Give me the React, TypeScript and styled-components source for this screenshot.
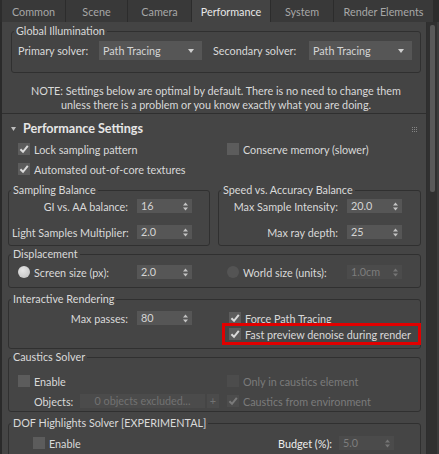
import React from 'react';
import styled, { createGlobalStyle } from 'styled-components';

const GlobalStyle = createGlobalStyle`
  html, body {
    margin: 0;
    padding: 0;
    background: #2d2d2d;
  }
  body {
    width: 439px;
    height: 454px;
    overflow: hidden;
    font-family: Lato, "Noto Sans", sans-serif;
    font-size: 10.8px;
    color: #d9d9d9;
  }
  * { box-sizing: border-box; }
`;

const Frame = styled.div`
  width: 439px;
  height: 454px;
  display: flex;
  flex-direction: column;
  overflow: hidden;
  background: #2d2d2d;
`;

const TabBar = styled.div`
  display: flex;
  height: 22px;
  padding-left: 2px;
  background: #2c2c2c;
`;

const Tab = styled.div<{ $active?: boolean; $w: number }>`
  width: ${p => p.$w}px;
  display: flex;
  align-items: center;
  justify-content: center;
  padding-top: 1px;
  background: ${p => (p.$active ? '#444444' : '#393939')};
  color: ${p => (p.$active ? '#e8e8e8' : '#a7a7a7')};
  border-right: 1px solid #2c2c2c;
  white-space: nowrap;
`;

const Body = styled.div`
  flex: 1;
  display: flex;
  min-height: 0;
`;

const LeftEdge = styled.div`
  width: 2px;
  background: #2a2a2a;
`;

const Main = styled.div`
  width: 425px;
  background: #444444;
  border-right: 1px solid #2e2e2e;
  display: flex;
  flex-direction: column;
`;

const ScrollTrack = styled.div`
  width: 10px;
  padding: 3px 2px 0 3px;
  background: #303030;
`;

const ScrollThumb = styled.div`
  height: 167px;
  border-radius: 2px;
  background: #595959;
`;

const RightEdge = styled.div`
  flex: 1;
  background: #3b3b3b;
`;

const TopSection = styled.div`
  padding: 3px 5px 0 9px;
`;

const Group = styled.fieldset<{ $mt?: number }>`
  margin: ${p => p.$mt ?? 0}px 0 0 0;
  padding: 0;
  min-width: 0;
  border: 1px solid #303030;
  border-radius: 3px;
`;

const Legend = styled.legend`
  margin-left: 2px;
  padding: 0 2px;
  line-height: 12px;
  color: #dadada;
`;

const SolverRow = styled.div`
  display: grid;
  grid-template-columns: 81px 103px 107px 103px;
  align-items: center;
  padding: 4px 0 12px 6px;
`;

const SolverLabel = styled.span<{ $pad?: number }>`
  padding-left: ${p => p.$pad ?? 0}px;
  white-space: nowrap;
`;

const Dropdown = styled.div`
  height: 19px;
  display: flex;
  align-items: center;
  justify-content: space-between;
  padding: 0 8px 0 4px;
  background: #565656;
  color: #d4d4d4;
`;

const Note = styled.p`
  margin: 11px 0 1px;
  text-align: center;
  line-height: 14px;
  white-space: nowrap;
`;

const Rollout = styled.div`
  flex: 1;
  border-top: 1px solid #2f2f2f;
  padding: 0 5px 0 6px;
  background: #454545;
`;

const RolloutHeader = styled.div`
  display: flex;
  align-items: center;
  padding: 8px 4px 3px 3px;
  line-height: 14px;
`;

const RolloutTitle = styled.span`
  margin-left: 7px;
  font-size: 12.6px;
  font-weight: 700;
  color: #e6e6e6;
`;

const Grip = styled.span`
  margin-left: auto;
  display: flex;
`;

const TwoCols = styled.div<{ $left: number; $pl?: number }>`
  display: grid;
  grid-template-columns: ${p => p.$left}px 1fr;
  padding-left: ${p => p.$pl ?? 0}px;
`;

const Stack = styled.div<{ $gap?: number; $pl?: number; $pt?: number; $pb?: number }>`
  display: flex;
  flex-direction: column;
  gap: ${p => p.$gap ?? 0}px;
  padding: ${p => p.$pt ?? 0}px 0 ${p => p.$pb ?? 0}px ${p => p.$pl ?? 0}px;
`;

const CheckRow = styled.label<{ $h?: number; $pl?: number; $mark?: boolean; $disabled?: boolean }>`
  display: flex;
  align-items: center;
  gap: 4px;
  height: ${p => p.$h ?? 20}px;
  padding-left: ${p => p.$pl ?? 0}px;
  color: ${p => (p.$disabled ? '#7b7b7b' : '#d9d9d9')};
  white-space: nowrap;
  ${p => (p.$mark ? 'outline: 3px solid #e10000; margin-right: 2px;' : '')}
`;

const Box = styled.span<{ $disabled?: boolean }>`
  width: 12px;
  height: 12px;
  flex: none;
  display: flex;
  align-items: center;
  justify-content: center;
  background: ${p => (p.$disabled ? '#4c4c4c' : '#5c5c5c')};
`;

const Radio = styled.span<{ $on?: boolean }>`
  width: 12px;
  height: 12px;
  flex: none;
  border-radius: 50%;
  background: ${p => (p.$on ? 'radial-gradient(circle at 40% 35%, #e6e6e6, #bdbdbd)' : '#545454')};
`;

const BalanceGrid = styled.div`
  display: grid;
  grid-template-columns: 202px 203px;
  column-gap: 8px;
  margin-top: 5px;
`;

const SpinRow = styled.div<{ $label: number; $gap?: number; $h?: number; $pl?: number }>`
  display: grid;
  grid-template-columns: ${p => p.$label}px 55px;
  column-gap: ${p => p.$gap ?? 9}px;
  align-items: center;
  height: ${p => p.$h ?? 20}px;
  padding-left: ${p => p.$pl ?? 0}px;
`;

const SpinLabel = styled.span<{ $bright?: boolean }>`
  text-align: right;
  white-space: nowrap;
  color: ${p => (p.$bright ? '#ededed' : '#d9d9d9')};
`;

const OptionLabel = styled.span<{ $disabled?: boolean }>`
  display: flex;
  align-items: center;
  gap: 4px;
  white-space: nowrap;
`;

const SpinBox = styled.div<{ $disabled?: boolean }>`
  height: 14px;
  display: flex;
  align-items: center;
  justify-content: space-between;
  padding: 0 4px;
  background: ${p => (p.$disabled ? '#4b4b4b' : '#565656')};
  color: ${p => (p.$disabled ? '#7d7d7d' : '#d4d4d4')};
  line-height: 14px;
`;

const ObjectsRow = styled.div`
  display: grid;
  grid-template-columns: 44px 125px 12px;
  column-gap: 2px;
  align-items: center;
  height: 20px;
  padding-left: 25px;
`;

const Field = styled.div`
  height: 14px;
  display: flex;
  align-items: center;
  justify-content: center;
  background: #4b4b4b;
  color: #727272;
  line-height: 14px;
`;

const Check = ({ disabled }: { disabled?: boolean }) => (
  <svg width="10" height="10" viewBox="0 0 10 10">
    <path d="M1.4 5.2 L4 7.8 L8.8 1.8" fill="none" stroke={disabled ? '#7a7a7a' : '#dadada'} strokeWidth="2" />
  </svg>
);

const CheckBox = ({ checked, disabled }: { checked?: boolean; disabled?: boolean }) => (
  <Box $disabled={disabled}>{checked && <Check disabled={disabled} />}</Box>
);

const Arrows = ({ disabled }: { disabled?: boolean }) => (
  <svg width="5" height="9" viewBox="0 0 5 9">
    <path d="M0 3.5 L2.5 0.5 L5 3.5Z M0 5.5 L2.5 8.5 L5 5.5Z" fill={disabled ? '#767676' : '#c4c4c4'} />
  </svg>
);

const Spinner = ({ value, disabled }: { value: string; disabled?: boolean }) => (
  <SpinBox $disabled={disabled}>
    <span>{value}</span>
    <Arrows disabled={disabled} />
  </SpinBox>
);

const DropArrow = () => (
  <svg width="6" height="4" viewBox="0 0 6 4">
    <path d="M0 0 L6 0 L3 4Z" fill="#cfcfcf" />
  </svg>
);

const GripDots = () => (
  <svg width="5" height="5" viewBox="0 0 5 5">
    {[0, 2, 4].map(y =>
      [0, 2, 4].map(x => <rect key={`${x}-${y}`} x={x} y={y} width="1" height="1" fill="#858585" />)
    )}
  </svg>
);

const Collapse = () => (
  <svg width="5" height="4" viewBox="0 0 5 4">
    <path d="M0 0 L5 0 L2.5 4Z" fill="#bdbdbd" />
  </svg>
);

const tabs = [
  { name: 'Common', w: 64 },
  { name: 'Scene', w: 62 },
  { name: 'Camera', w: 64 },
  { name: 'Performance', w: 79, active: true },
  { name: 'System', w: 63 },
  { name: 'Render Elements', w: 100 },
];

const App: React.FC = () => (
  <Frame>
    <GlobalStyle />
    <TabBar>
      {tabs.map(t => (
        <Tab key={t.name} $w={t.w} $active={t.active}>
          {t.name}
        </Tab>
      ))}
    </TabBar>
    <Body>
      <LeftEdge />
      <Main>
        <TopSection>
          <Group>
            <Legend>Global Illumination</Legend>
            <SolverRow>
              <SolverLabel>Primary solver:</SolverLabel>
              <Dropdown>
                <span>Path Tracing</span>
                <DropArrow />
              </Dropdown>
              <SolverLabel $pad={11}>Secondary solver:</SolverLabel>
              <Dropdown>
                <span>Path Tracing</span>
                <DropArrow />
              </Dropdown>
            </SolverRow>
          </Group>
          <Note>
            NOTE: Settings below are optimal by default. There is no need to change them
            <br />
            unless there is a problem or you know exactly what you are doing.
          </Note>
        </TopSection>

        <Rollout>
          <RolloutHeader>
            <Collapse />
            <RolloutTitle>Performance Settings</RolloutTitle>
            <Grip>
              <GripDots />
            </Grip>
          </RolloutHeader>

          <TwoCols $left={209} $pl={10}>
            <Stack>
              <CheckRow>
                <CheckBox checked />
                Lock sampling pattern
              </CheckRow>
              <CheckRow>
                <CheckBox checked />
                Automated out-of-core textures
              </CheckRow>
            </Stack>
            <Stack>
              <CheckRow>
                <CheckBox />
                Conserve memory (slower)
              </CheckRow>
            </Stack>
          </TwoCols>

          <BalanceGrid>
            <Group>
              <Legend>Sampling Balance</Legend>
              <Stack $gap={6} $pl={3} $pb={3}>
                <SpinRow $label={116}>
                  <SpinLabel>GI vs. AA balance:</SpinLabel>
                  <Spinner value="16" />
                </SpinRow>
                <SpinRow $label={116}>
                  <SpinLabel>Light Samples Multiplier:</SpinLabel>
                  <Spinner value="2.0" />
                </SpinRow>
              </Stack>
            </Group>
            <Group>
              <Legend>Speed vs. Accuracy Balance</Legend>
              <Stack $gap={6} $pl={3} $pb={3}>
                <SpinRow $label={116}>
                  <SpinLabel>Max Sample Intensity:</SpinLabel>
                  <Spinner value="20.0" />
                </SpinRow>
                <SpinRow $label={116}>
                  <SpinLabel>Max ray depth:</SpinLabel>
                  <Spinner value="25" />
                </SpinRow>
              </Stack>
            </Group>
          </BalanceGrid>

          <Group $mt={2}>
            <Legend>Displacement</Legend>
            <Stack $pt={2} $pb={5}>
              <TwoCols $left={210}>
                <SpinRow $label={119} $gap={0} $pl={9}>
                  <OptionLabel>
                    <Radio $on />
                    Screen size (px):
                  </OptionLabel>
                  <Spinner value="2.0" />
                </SpinRow>
                <SpinRow $label={120} $gap={0} $pl={8}>
                  <OptionLabel>
                    <Radio />
                    World size (units):
                  </OptionLabel>
                  <Spinner value="1.0cm" disabled />
                </SpinRow>
              </TwoCols>
            </Stack>
          </Group>

          <Group $mt={5}>
            <Legend>Interactive Rendering</Legend>
            <Stack $pt={5} $pb={6}>
              <TwoCols $left={216}>
                <div>
                  <SpinRow $label={116} $h={16} $pl={3}>
                    <SpinLabel>Max passes:</SpinLabel>
                    <Spinner value="80" />
                  </SpinRow>
                </div>
                <Stack>
                  <CheckRow $h={16} $pl={4}>
                    <CheckBox checked />
                    Force Path Tracing
                  </CheckRow>
                  <CheckRow $h={16} $pl={4} $mark>
                    <CheckBox checked />
                    Fast preview denoise during render
                  </CheckRow>
                </Stack>
              </TwoCols>
            </Stack>
          </Group>

          <Group $mt={2}>
            <Legend>Caustics Solver</Legend>
            <Stack $pt={8}>
              <TwoCols $left={216}>
                <Stack>
                  <CheckRow $pl={9}>
                    <CheckBox />
                    Enable
                  </CheckRow>
                  <ObjectsRow>
                    <span>Objects:</span>
                    <Field>0 objects excluded...</Field>
                    <Field>+</Field>
                  </ObjectsRow>
                </Stack>
                <Stack>
                  <CheckRow $pl={2} $disabled>
                    <CheckBox disabled />
                    Only in caustics element
                  </CheckRow>
                  <CheckRow $pl={2} $disabled>
                    <CheckBox checked disabled />
                    Caustics from environment
                  </CheckRow>
                </Stack>
              </TwoCols>
            </Stack>
          </Group>

          <Group $mt={5}>
            <Legend>DOF Highlights Solver [EXPERIMENTAL]</Legend>
            <Stack $pt={4} $pb={6}>
              <TwoCols $left={216}>
                <CheckRow $pl={24}>
                  <CheckBox />
                  Enable
                </CheckRow>
                <SpinRow $label={107} $gap={7}>
                  <SpinLabel $bright>Budget (%):</SpinLabel>
                  <Spinner value="5.0" disabled />
                </SpinRow>
              </TwoCols>
            </Stack>
          </Group>
        </Rollout>
      </Main>
      <ScrollTrack>
        <ScrollThumb />
      </ScrollTrack>
      <RightEdge />
    </Body>
  </Frame>
);

export default App;
